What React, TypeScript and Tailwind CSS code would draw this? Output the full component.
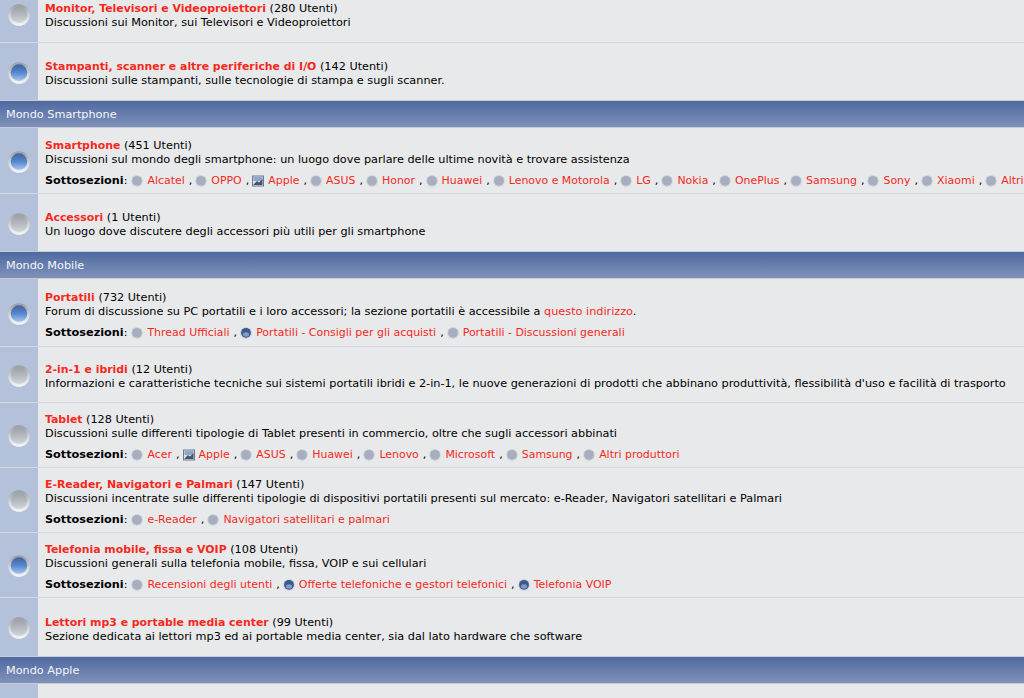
const RED = 'text-[#f5291b]';

type Sub = { name: string; icon?: 'off' | 'on' | 'pic' };

type Forum = {
  title: string;
  users: string;
  desc: React.ReactNode;
  on?: boolean;
  subs?: Sub[];
  height: string;
};

type Section = { title?: string; forums: Forum[] };

const sections: Section[] = [
  {
    forums: [
      {
        title: 'Monitor, Televisori e Videoproiettori',
        users: '(280 Utenti)',
        desc: 'Discussioni sui Monitor, sui Televisori e Videoproiettori',
        height: 'h-[58px]',
      },
      {
        title: 'Stampanti, scanner e altre periferiche di I/O',
        users: '(142 Utenti)',
        desc: 'Discussioni sulle stampanti, sulle tecnologie di stampa e sugli scanner.',
        on: true,
        height: 'h-[57px]',
      },
    ],
  },
  {
    title: 'Mondo Smartphone',
    forums: [
      {
        title: 'Smartphone',
        users: '(451 Utenti)',
        desc: 'Discussioni sul mondo degli smartphone: un luogo dove parlare delle ultime novità e trovare assistenza',
        on: true,
        height: 'h-[66px]',
        subs: [
          { name: 'Alcatel' },
          { name: 'OPPO' },
          { name: 'Apple', icon: 'pic' },
          { name: 'ASUS' },
          { name: 'Honor' },
          { name: 'Huawei' },
          { name: 'Lenovo e Motorola' },
          { name: 'LG' },
          { name: 'Nokia' },
          { name: 'OnePlus' },
          { name: 'Samsung' },
          { name: 'Sony' },
          { name: 'Xiaomi' },
          { name: 'Altri produttori' },
        ],
      },
      {
        title: 'Accessori',
        users: '(1 Utenti)',
        desc: 'Un luogo dove discutere degli accessori più utili per gli smartphone',
        height: 'h-[57px]',
      },
    ],
  },
  {
    title: 'Mondo Mobile',
    forums: [
      {
        title: 'Portatili',
        users: '(732 Utenti)',
        desc: (
          <>
            Forum di discussione su PC portatili e i loro accessori; la sezione portatili è accessibile a{' '}
            <span className={RED}>questo indirizzo</span>.
          </>
        ),
        on: true,
        height: 'h-[68px]',
        subs: [
          { name: 'Thread Ufficiali' },
          { name: 'Portatili - Consigli per gli acquisti', icon: 'on' },
          { name: 'Portatili - Discussioni generali' },
        ],
      },
      {
        title: '2-in-1 e ibridi',
        users: '(12 Utenti)',
        desc: "Informazioni e caratteristiche tecniche sui sistemi portatili ibridi e 2-in-1, le nuove generazioni di prodotti che abbinano produttività, flessibilità d'uso e facilità di trasporto",
        height: 'h-[56px]',
      },
      {
        title: 'Tablet',
        users: '(128 Utenti)',
        desc: 'Discussioni sulle differenti tipologie di Tablet presenti in commercio, oltre che sugli accessori abbinati',
        height: 'h-[65px]',
        subs: [
          { name: 'Acer' },
          { name: 'Apple', icon: 'pic' },
          { name: 'ASUS' },
          { name: 'Huawei' },
          { name: 'Lenovo' },
          { name: 'Microsoft' },
          { name: 'Samsung' },
          { name: 'Altri produttori' },
        ],
      },
      {
        title: 'E-Reader, Navigatori e Palmari',
        users: '(147 Utenti)',
        desc: 'Discussioni incentrate sulle differenti tipologie di dispositivi portatili presenti sul mercato: e-Reader, Navigatori satellitari e Palmari',
        height: 'h-[65px]',
        subs: [{ name: 'e-Reader' }, { name: 'Navigatori satellitari e palmari' }],
      },
      {
        title: 'Telefonia mobile, fissa e VOIP',
        users: '(108 Utenti)',
        desc: 'Discussioni generali sulla telefonia mobile, fissa, VOIP e sui cellulari',
        on: true,
        height: 'h-[65px]',
        subs: [
          { name: 'Recensioni degli utenti' },
          { name: 'Offerte telefoniche e gestori telefonici', icon: 'on' },
          { name: 'Telefonia VOIP', icon: 'on' },
        ],
      },
      {
        title: 'Lettori mp3 e portable media center',
        users: '(99 Utenti)',
        desc: 'Sezione dedicata ai lettori mp3 ed ai portable media center, sia dal lato hardware che software',
        height: 'h-[58px]',
      },
    ],
  },
  { title: 'Mondo Apple', forums: [] },
];

// big status orb on the left column
const Orb = ({ on }: { on?: boolean }) => (
  <svg width="22" height="22" viewBox="0 0 22 22">
    <defs>
      <linearGradient id="orbRing" x1="0" y1="0" x2="0" y2="1">
        <stop offset="0" stopColor="#979ca0" />
        <stop offset="0.5" stopColor="#cfd2d4" />
        <stop offset="1" stopColor="#f6f7f8" />
      </linearGradient>
      <linearGradient id="orbOn" x1="0" y1="0" x2="0" y2="1">
        <stop offset="0" stopColor="#41629a" />
        <stop offset="0.5" stopColor="#5687d0" />
        <stop offset="1" stopColor="#a9c6ee" />
      </linearGradient>
      <linearGradient id="orbOff" x1="0" y1="0" x2="0" y2="1">
        <stop offset="0" stopColor="#9aa0a6" />
        <stop offset="0.5" stopColor="#b3b9bf" />
        <stop offset="1" stopColor="#d0d5d9" />
      </linearGradient>
    </defs>
    <circle cx="11" cy="11" r="10.8" fill="url(#orbRing)" />
    <circle cx="11" cy="10.6" r="8.3" fill={on ? 'url(#orbOn)' : 'url(#orbOff)'} />
  </svg>
);

const SmallIcon = ({ kind = 'off' }: { kind?: Sub['icon'] }) => {
  if (kind === 'pic') {
    return (
      <svg width="12" height="12" viewBox="0 0 12 12" className="shrink-0">
        <rect x="0.5" y="1" width="11" height="10" fill="#dfe3e8" stroke="#6d7b92" />
        <rect x="1.5" y="2" width="9" height="4" fill="#8ea6c9" />
        <path d="M1.5 9.5 L5 6 L7 7.5 L10.5 4 L10.5 10 L1.5 10 Z" fill="#47536b" />
      </svg>
    );
  }
  return (
    <svg width="12" height="12" viewBox="0 0 12 12" className="shrink-0">
      <circle cx="6" cy="6" r="5.9" fill={kind === 'on' ? '#cfd3d8' : '#d2d5da'} />
      <circle cx="6" cy="5.8" r="4.9" fill={kind === 'on' ? '#3f5a88' : '#a6aebf'} />
      {kind === 'on' && <ellipse cx="6" cy="7.4" rx="3" ry="2.2" fill="#7c9bcb" />}
    </svg>
  );
};

const ForumRow = ({ forum, last }: { forum: Forum; last: boolean }) => (
  <div className={`flex ${forum.height} ${last ? '' : 'border-b border-[#d6d8db]'}`}>
    <div className="flex w-[38px] shrink-0 items-center justify-center bg-[#b3c1da] pt-[2px]">
      <Orb on={forum.on} />
    </div>
    <div className="flex min-w-0 flex-1 flex-col justify-center overflow-hidden bg-[#e8e9eb] pl-[7px] pt-[5px]">
      <div className="whitespace-nowrap leading-[14px]">
        <span className={`text-[10.9px] font-bold ${RED}`}>{forum.title}</span> {forum.users}
      </div>
      <div className="whitespace-nowrap leading-[14px]">{forum.desc}</div>
      {forum.subs && (
        <div className="mt-[7px] flex items-center whitespace-nowrap leading-[14px]">
          <span>
            <b>Sottosezioni</b>:
          </span>
          {forum.subs.map((sub, i) => (
            <span key={sub.name} className="flex shrink-0 items-center">
              <span className="ml-[4px] mr-[4px]">
                <SmallIcon kind={sub.icon} />
              </span>
              <span className={`text-[10.95px] ${RED}`}>{sub.name}</span>
              {i < forum.subs!.length - 1 && <span className="ml-[4px] mr-[-1px]">,</span>}
            </span>
          ))}
        </div>
      )}
    </div>
  </div>
);

const SectionHeader = ({ title }: { title: string }) => (
  <div className="flex h-[28px] items-center border-y border-y-[#c5cbd6] bg-gradient-to-b from-[#4f69a0] to-[#7f92ba] pl-[6px] pt-[3px] text-[#f4f6fa]">
    {title}
  </div>
);

export default function App() {
  return (
    <div className="h-[698px] w-[1024px] overflow-hidden bg-[#e8e9eb] font-['DejaVu_Sans',sans-serif] text-[11.25px] text-black">
      <div className="mt-[-15px]">
        {sections.map((section, i) => (
          <div key={i}>
            {section.title && <SectionHeader title={section.title} />}
            {section.forums.map((forum, j) => (
              <ForumRow key={forum.title} forum={forum} last={j === section.forums.length - 1} />
            ))}
          </div>
        ))}
        <div className="flex h-[30px]">
          <div className="w-[38px] bg-[#b3c1da]" />
          <div className="flex-1 bg-[#e8e9eb]" />
        </div>
      </div>
    </div>
  );
}
